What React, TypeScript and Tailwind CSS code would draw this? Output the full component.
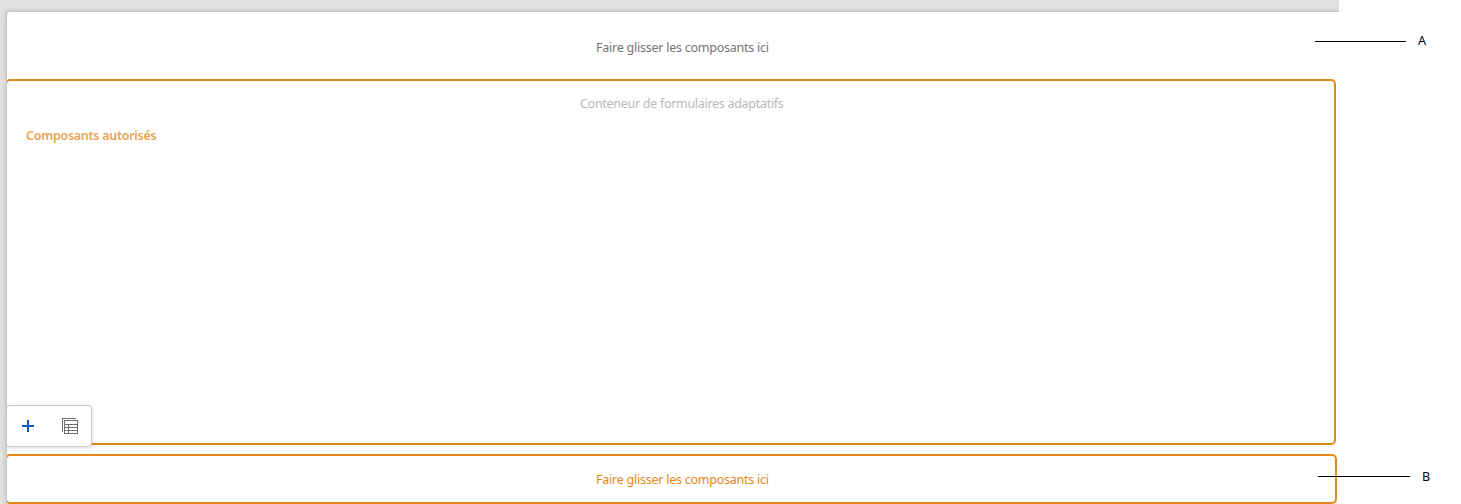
import React from 'react';

function DropHint({ className, children }: { className: string; children: React.ReactNode }) {
  return <p className={`whitespace-nowrap text-[12.5px] leading-[18px] ${className}`}>{children}</p>;
}

function PlusIcon() {
  return (
    <svg width="12" height="12" viewBox="0 0 12 12" shapeRendering="crispEdges" aria-hidden="true">
      <path d="M5 0h2v5h5v2H7v5H5V7H0V5h5z" fill="#0a5bc4" />
    </svg>
  );
}

function TableIcon() {
  return (
    <svg width="16" height="16" viewBox="0 0 16 16" shapeRendering="crispEdges" aria-hidden="true">
      <path
        d="M0 0h14v1H1v13H0zM2 2h14v14H2zM3 3v3h12V3zM3 7v2h3V7zM7 7v2h8V7zM3 10v2h3v-2zM7 10v2h8v-2zM3 13v2h3v-2zM7 13v2h8v-2z"
        fill="#6e6e6e"
        fillRule="evenodd"
      />
    </svg>
  );
}

function Toolbar() {
  return (
    <div className="absolute top-[324px] left-[-1px] flex h-[42px] w-[86px] items-center rounded-[4px] border border-[#cacaca] bg-white pl-[15px] shadow-[0_1px_4px_rgba(0,0,0,0.15)]">
      <button type="button" aria-label="Ajouter" className="mr-[28px]"><PlusIcon /></button>
      <button type="button" aria-label="Tableau"><TableIcon /></button>
    </div>
  );
}

export default function App() {
  return (
    <main className="relative flex h-[504px] w-[1461px] overflow-hidden bg-white font-['Noto_Sans',sans-serif]">
      <div className="h-[504px] w-[1339px] overflow-hidden bg-[#e1e1e1] pt-[11px] pl-[6px]">
        <div className="h-[493px] rounded-tl-[4px] border-t border-l border-[#c6c6c6] bg-white shadow-[0_0_5px_rgba(0,0,0,0.18)]">
          <div className="h-full overflow-hidden rounded-tl-[3px]">
            <header className="h-[67px] pt-[27px] pl-[589px]">
              <DropHint className="tracking-[-0.24px] text-[#747474]">Faire glisser les composants ici</DropHint>
            </header>
            <section className="relative -ml-[2px] h-[366px] w-[1331px] rounded-[5px] border-2 border-[#e68619] pt-[14px]">
              <DropHint className="ml-[573px] tracking-[-0.29px] text-[#b8b8b8]">Conteneur de formulaires adaptatifs</DropHint>
              <DropHint className="mt-[14px] ml-[19px] font-semibold tracking-[-0.27px] text-[#eda24f]">Composants autorisés</DropHint>
              <Toolbar />
            </section>
            <section className="mt-[9px] -ml-[2px] h-[50px] w-[1332px] rounded-[5px] border-2 border-[#e68619] pt-[15px]">
              <DropHint className="ml-[589px] tracking-[-0.24px] text-[#e68619]">Faire glisser les composants ici</DropHint>
            </section>
          </div>
        </div>
      </div>
      <div className="absolute top-[33px] left-[1315px] flex h-4 items-center text-[12.5px] leading-4 text-black">
        <span className="mr-[12px] h-px w-[91px] bg-black" />A
      </div>
      <div className="absolute top-[469px] left-[1318px] flex h-4 items-center text-[12.5px] leading-4 text-black">
        <span className="mr-[12px] mb-[2px] h-px w-[92px] bg-black" />B
      </div>
    </main>
  );
}
